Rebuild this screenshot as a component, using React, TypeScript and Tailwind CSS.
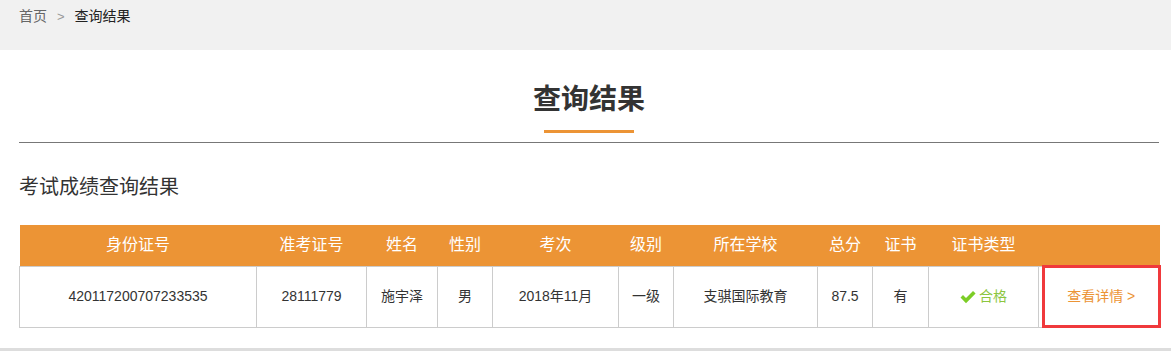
import React from 'react';

const columns = [
  { title: '身份证号', width: 237 },
  { title: '准考证号', width: 110 },
  { title: '姓名', width: 71 },
  { title: '性别', width: 55 },
  { title: '考次', width: 126 },
  { title: '级别', width: 55 },
  { title: '所在学校', width: 144 },
  { title: '总分', width: 55 },
  { title: '证书', width: 56 },
  { title: '证书类型', width: 110 },
  { title: '', width: 121 },
];

const row = ['420117200707233535', '28111779', '施宇泽', '男', '2018年11月', '一级', '支骐国际教育', '87.5', '有'];

const font = { fontFamily: '"Liberation Sans", Arial, "Noto Sans CJK SC", sans-serif' };

// Green tick before 合格
const Tick = () => (
  <svg width="16" height="14" viewBox="0 0 16 14" className="mr-[3px]">
    <path d="M0.5 7.6 L3 5.1 L6 8.1 L13 1 L15.6 3.5 L6 13.2 Z" fill="#7ccd26" />
  </svg>
);

const App: React.FC = () => {
  return (
    <div className="w-[1171px] h-[351px] bg-white overflow-hidden text-[#333]" style={font}>
      {/* Breadcrumb */}
      <div className="h-[50px] bg-[#f1f1f1] pl-[19px] pt-[6px] text-[14px] leading-[20px]">
        <span className="text-[#666]">首页</span>
        <span className="text-[#999] text-[13px] mx-[10px]">&gt;</span>
        <span className="text-[#222]">查询结果</span>
      </div>

      <div className="ml-[19px] w-[1140px]">
        {/* Title */}
        <div className="flex flex-col items-center border-b border-[#777] h-[93px]">
          <h1 className="mt-[33px] text-[28px] leading-[34px] font-bold text-[#333]">查询结果</h1>
          <div className="mt-[13px] w-[90px] h-[3px] bg-[#ec9435]" />
        </div>

        <h2 className="mt-[32px] text-[20px] leading-[24px] text-[#333]">考试成绩查询结果</h2>

        {/* Result table */}
        <table className="mt-[26px] table-fixed border-collapse w-[1140px]">
          <colgroup>
            {columns.map((c, i) => (
              <col key={i} style={{ width: c.width }} />
            ))}
          </colgroup>
          <thead>
            <tr className="bg-[#ec9435] h-[41px]">
              {columns.map((c, i) => (
                <th key={i} className="text-white text-[16px] font-normal p-0 text-center">
                  {c.title}
                </th>
              ))}
            </tr>
          </thead>
          <tbody>
            <tr className="h-[61px]">
              {row.map((v, i) => (
                <td key={i} className="border border-[#ccc] text-[14px] text-center p-0 text-[#333]">
                  {v}
                </td>
              ))}
              <td className="border border-[#ccc] p-0">
                <div className="flex items-center justify-center text-[14px] text-[#8cc63f]">
                  <Tick />
                  合格
                </div>
              </td>
              <td className="border-y border-l border-[#ccc] p-0 relative">
                <div className="absolute left-[3px] right-[-1px] top-[-2px] bottom-[-1px] border-[3px] border-[#f0393c] flex items-center justify-center text-[14px] text-[#ec9435]">
                  查看详情 &gt;
                </div>
              </td>
            </tr>
          </tbody>
        </table>
      </div>

      <div className="mt-[20px] h-[4px] bg-[#ddd]" />
    </div>
  );
};

export default App;
